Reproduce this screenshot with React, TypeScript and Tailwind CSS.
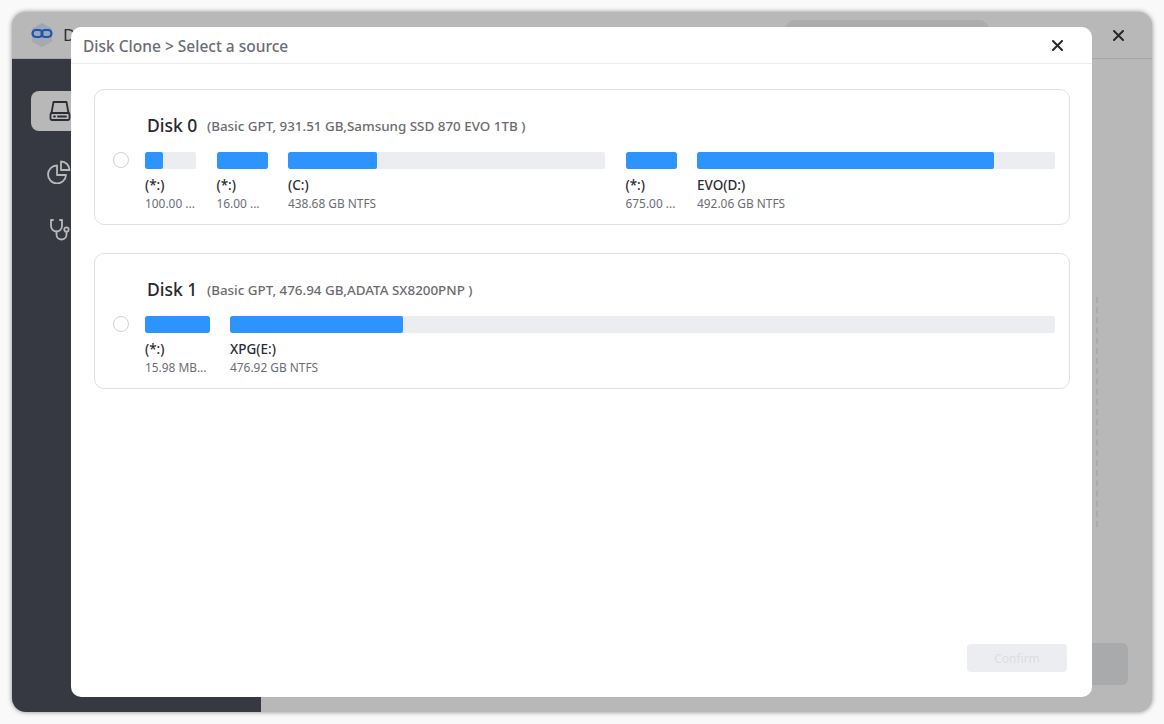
const font = "font-['Noto_Sans','Open_Sans',sans-serif]";

const disks = [
  {
    name: "Disk 0",
    info: "(Basic GPT, 931.51 GB,Samsung SSD 870 EVO 1TB )",
    gap: "gap-[20.5px]",
    parts: [
      { label: "(*:)", size: "100.00 ...", w: 51, used: 18 },
      { label: "(*:)", size: "16.00 ...", w: 51, used: 51 },
      { label: "(C:)", size: "438.68 GB NTFS", w: 317, used: 89 },
      { label: "(*:)", size: "675.00 ...", w: 51, used: 51 },
      { label: "EVO(D:)", size: "492.06 GB NTFS", w: 358, used: 297 },
    ],
  },
  {
    name: "Disk 1",
    info: "(Basic GPT, 476.94 GB,ADATA SX8200PNP )",
    gap: "gap-[20px]",
    parts: [
      { label: "(*:)", size: "15.98 MB...", w: 65, used: 65 },
      { label: "XPG(E:)", size: "476.92 GB NTFS", w: 825, used: 173 },
    ],
  },
];

function Logo() {
  return (
    <svg width="24" height="26" viewBox="0 0 24 26" fill="none">
      <path d="M12 1l10 5.500v13L12 25 2 19.500v-13z" fill="#9ba6b6" />
      <path d="M12 15l10 -1v5.500L12 25 2 19.500V14z" fill="#a6aab0" />
      <rect x="2.500" y="8" width="10" height="7" rx="3.500" stroke="#1a55b5" strokeWidth="2.200" />
      <rect x="11.500" y="8" width="10" height="7" rx="3.500" stroke="#1a55b5" strokeWidth="2.200" />
    </svg>
  );
}

function DriveIcon() {
  return (
    <svg width="22" height="22" viewBox="0 0 22 22" fill="none" stroke="#2b2d35" strokeWidth="1.800" strokeLinejoin="round" strokeLinecap="round">
      <path d="M4.500 2h13l2 11H2.500z" />
      <rect x="1.500" y="13" width="19" height="7" rx="1.500" />
      <path d="M5 16.500h1M9 16.500h8" />
    </svg>
  );
}

function PieIcon() {
  return (
    <svg width="24" height="24" viewBox="0 0 24 24" fill="none" stroke="#b8b8b8" strokeWidth="1.800" strokeLinejoin="round">
      <path d="M10 5.500a9 9 0 1 0 9 9.500H10z" />
      <path d="M14 1.500a8.500 8.500 0 0 1 8.500 8.500H14z" />
    </svg>
  );
}

function ScopeIcon() {
  return (
    <svg width="22" height="24" viewBox="0 0 22 24" fill="none" stroke="#b8b8b8" strokeWidth="1.800" strokeLinecap="round" strokeLinejoin="round">
      <path d="M4 2H2v6a5.500 5.500 0 0 0 11 0V2h-2" />
      <path d="M7.500 13.500v3a5 5 0 0 0 10 0v-2" />
      <circle cx="17.500" cy="11.500" r="2.200" />
    </svg>
  );
}

function CloseIcon() {
  return (
    <svg width="11" height="11" viewBox="0 0 11 11" stroke="#26282e" strokeWidth="2" strokeLinecap="round">
      <path d="M1 1l9 9M10 1l-9 9" />
    </svg>
  );
}

function DiskCard({ disk }: { disk: (typeof disks)[number] }) {
  return (
    <div className="h-[136px] rounded-[10px] border border-[#dfe0e4] pl-[18px] pr-[14px] pt-[25px]">
      <div className="flex items-center pl-[34px] h-[22px]">
        <span className="-mt-[1px] text-[17.5px] font-medium text-[#26282e] w-[60px]">{disk.name}</span>
        <span className="text-[13.4px] font-medium text-[#6b6b70]">{disk.info}</span>
      </div>
      <div className="flex mt-[15px]">
        <div className="w-[16px] h-[16px] rounded-full border border-[#cfd1d6] mr-[16px] shrink-0" />
        <div className={`flex ${disk.gap}`}>
          {disk.parts.map((p, i) => (
            <div key={i} style={{ width: p.w }}>
              <div className="h-[17px] rounded-[2px] bg-[#ecedf1] overflow-hidden">
                <div className="h-full rounded-[2px] bg-[#2d93ff]" style={{ width: p.used }} />
              </div>
              <div className="mt-[7px] text-[13.5px] leading-[18px] font-medium text-[#2b2d35]">{p.label}</div>
              <div className="text-[11.9px] leading-[18px] text-[#6b6d75] whitespace-nowrap">{p.size}</div>
            </div>
          ))}
        </div>
      </div>
    </div>
  );
}

export default function App() {
  return (
    <div className={`w-[1164px] h-[724px] bg-[#f9f9f9] p-3 overflow-hidden ${font}`}>
      <div className="relative w-[1140px] h-[700px] rounded-[14px] overflow-hidden bg-[#b8b8b8] shadow-[0_0_5px_rgba(0,0,0,0.45)] flex flex-col">
        {/* Title bar behind the dialog */}
        <div className="h-[47px] shrink-0 flex items-center border-b border-[#a6a6a6] pl-[18px] pr-[28px]">
          <Logo />
          <span className="ml-[9px] text-[17px] text-[#2b2d35]">D</span>
          <div className="ml-auto mr-[124px] -mt-[9px] h-[22px] w-[204px] rounded-[10px] bg-[#adadad]" />
          <CloseIcon />
        </div>

        <div className="flex-1 flex">
          <div className="w-[249px] bg-[#373942] pl-[19px] pt-[32px] flex flex-col">
            <div className="h-[40px] w-[60px] rounded-l-[8px] bg-[#b8b8b8] flex items-center pl-[18px]">
              <DriveIcon />
            </div>
            <div className="mt-[29px] pl-[16px]">
              <PieIcon />
            </div>
            <div className="mt-[34px] pl-[18px]">
              <ScopeIcon />
            </div>
          </div>
          <div className="flex-1 relative">
            <div className="absolute left-[835px] top-[238px] w-0 h-[230px] border-r-2 border-dashed border-[#ababab]" />
            <div className="absolute right-[24px] top-[584px] w-[60px] h-[42px] rounded-[6px] bg-[#a9aaac]" />
          </div>
        </div>

        {/* Dialog */}
        <div className="absolute left-[59px] top-[15px] w-[1021px] h-[670px] rounded-[10px] bg-white flex flex-col">
          <div className="h-[37px] shrink-0 flex items-center justify-between border-b border-[#ecedf1] pl-[12px] pr-[29px]">
            <span className="mt-[3px] text-[15.5px] font-medium text-[#6b6d75]">Disk Clone &gt; Select a source</span>
            <CloseIcon />
          </div>
          <div className="flex-1 pl-[23px] pr-[22px] pt-[25px] flex flex-col gap-[28px]">
            {disks.map((d) => (
              <DiskCard key={d.name} disk={d} />
            ))}
          </div>
          <div className="flex justify-end pr-[25px] pb-[25px]">
            <div className="w-[100px] h-[28px] pt-[2px] rounded-[4px] bg-[#ecedf1] flex items-center justify-center text-[12px] text-[#dcdde1]">
              Confirm
            </div>
          </div>
        </div>
      </div>
    </div>
  );
}
